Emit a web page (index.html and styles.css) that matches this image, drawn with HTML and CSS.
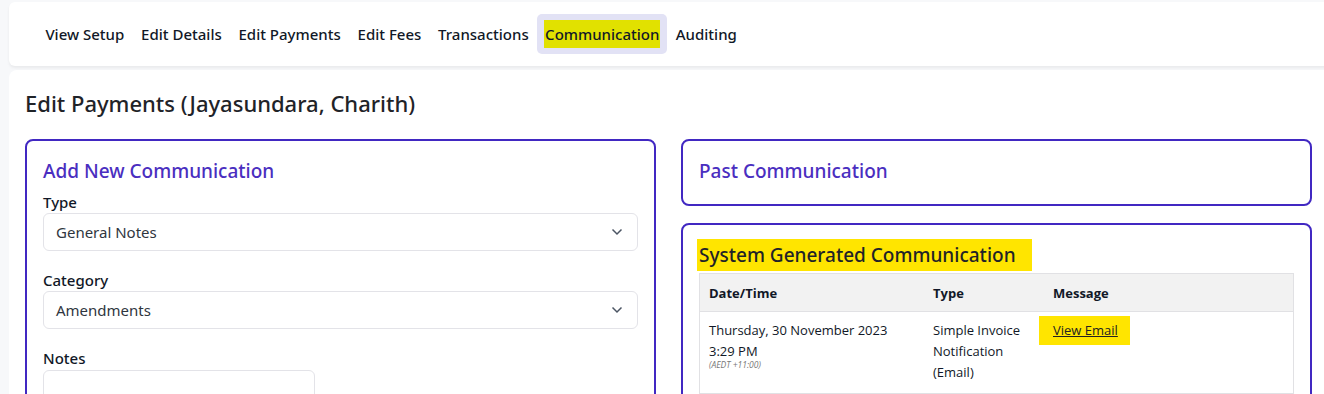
FILE: index.html
```html
<!DOCTYPE html>
<html>
<head>
  <link rel="stylesheet" href="styles.css">
</head>
<body>
  <div class="page">
    <div class="topbar">
      <nav class="tabs">
        <a class="tab">View Setup</a>
        <a class="tab">Edit Details</a>
        <a class="tab">Edit Payments</a>
        <a class="tab">Edit Fees</a>
        <a class="tab">Transactions</a>
        <a class="tab active"><span class="mark-nav">Communication</span></a>
        <a class="tab">Auditing</a>
      </nav>
    </div>

    <div class="content">
      <h1 class="page-title">Edit Payments (Jayasundara, Charith)</h1>

      <div class="columns">
        <div class="col">
          <div class="card">
            <h2 class="card-title">Add New Communication</h2>
            <label class="field-label">Type</label>
            <div class="select">
              <span>General Notes</span>
              <svg class="chevron" width="12" height="8" viewBox="0 0 12 8"><path d="M1.5 1.5 L6 6 L10.5 1.5" fill="none" stroke="#4b5563" stroke-width="1.5"/></svg>
            </div>
            <label class="field-label">Category</label>
            <div class="select">
              <span>Amendments</span>
              <svg class="chevron" width="12" height="8" viewBox="0 0 12 8"><path d="M1.5 1.5 L6 6 L10.5 1.5" fill="none" stroke="#4b5563" stroke-width="1.5"/></svg>
            </div>
            <label class="field-label">Notes</label>
            <div class="textarea"></div>
          </div>
        </div>

        <div class="col">
          <div class="card card-short">
            <h2 class="card-title">Past Communication</h2>
          </div>
          <div class="card">
            <h2 class="card-title dark"><span class="mark">System Generated Communication</span></h2>
            <table class="comms">
              <thead>
                <tr>
                  <th class="c-date">Date/Time</th>
                  <th class="c-type">Type</th>
                  <th>Message</th>
                </tr>
              </thead>
              <tbody>
                <tr>
                  <td>Thursday, 30 November 2023<br>3:29 PM<div class="tz">(AEDT +11:00)</div></td>
                  <td>Simple Invoice Notification (Email)</td>
                  <td><span class="mark-link"><a class="link">View Email</a></span></td>
                </tr>
              </tbody>
            </table>
          </div>
        </div>
      </div>
    </div>
  </div>
</body>
</html>
```

FILE: styles.css
```css
html, body {
  overflow: hidden;
}

body {
  margin: 0;
  background-color: #f7f8fa;
  font-family: "Noto Sans", "Open Sans", sans-serif;
  color: #111827;
}

.page {
  margin-left: 9px;
  padding-top: 2px;
  width: 1319px;
}

.topbar {
  background-color: white;
  height: 64px;
  border-radius: 6px 0 0 6px;
  box-shadow: 0 2px 3px rgba(0, 0, 0, 0.06);
  display: flex;
  align-items: center;
}

.tabs {
  display: flex;
  margin-left: 28px;
}

.tab {
  font-size: 15px;
  font-weight: 500;
  padding: 9px 8.4px;
  border-radius: 5px;
  line-height: 22px;
}

.tab.active {
  background-color: #e2e2f5;
  padding: 9px 7px 9px 7px;
}

.mark-nav {
  background-color: #e1e100;
  padding: 4px 1px;
}

.content {
  margin-top: 4px;
  background-color: white;
  border-radius: 8px 0 0 0;
  padding: 18px 16px 0 16px;
  height: 320px;
}

.page-title {
  margin: 0;
  font-size: 22px;
  font-weight: 500;
  line-height: 30px;
  color: #1f2328;
}

.columns {
  display: grid;
  grid-template-columns: 631px 631px;
  gap: 25px;
  margin-top: 21px;
}

.col {
  display: flex;
  flex-direction: column;
  gap: 17px;
}

.card {
  border: 2px solid #4128c2;
  border-radius: 8px;
  padding: 16px 16px 16px 16px;
}

.card-short {
  padding-bottom: 19px;
}

.card-title {
  margin: 0;
  font-size: 19px;
  font-weight: 500;
  line-height: 28px;
  color: #4a2ec0;
}

.card-title.dark {
  color: #1f2328;
}

.mark {
  background-color: #ffe500;
  padding: 3px 16px 3px 2px;
  margin-left: -2px;
}

.field-label {
  display: block;
  font-size: 15px;
  font-weight: 500;
  line-height: 22px;
  margin-top: 6px;
}

.select + .field-label {
  margin-top: 18px;
}

.select {
  height: 38px;
  box-sizing: border-box;
  border: 1px solid #e3e3e8;
  border-radius: 6px;
  display: flex;
  align-items: center;
  justify-content: space-between;
  padding: 0 14px 0 12px;
  font-size: 15px;
  color: #2f3640;
}

.textarea {
  width: 270px;
  height: 40px;
  border: 1px solid #e3e3e8;
  border-radius: 6px;
  margin-top: 1px;
}

.comms {
  width: 100%;
  margin-top: 4px;
  border-collapse: collapse;
  font-family: "Open Sans", "Noto Sans", sans-serif;
  font-size: 13px;
  border: 1px solid #e1e1e4;
}

.comms th {
  background-color: #f2f2f2;
  text-align: left;
  font-weight: 700;
  height: 37px;
  padding: 0 9px;
  border-bottom: 1px solid #e1e1e4;
}

.comms td {
  vertical-align: top;
  padding: 8px 9px 10px 9px;
  line-height: 21px;
  height: 61px;
}

.c-date {
  width: 206px;
}

.c-type {
  width: 102px;
}

.comms td:nth-child(2) {
  padding-right: 14px;
}

.tz {
  font-size: 8.5px;
  font-style: italic;
  color: #777;
  line-height: 10px;
  margin-top: -2px;
}

.mark-link {
  background-color: #ffe500;
  padding: 5px 12px 6px 14px;
  margin-left: -14px;
}

.link {
  text-decoration: underline;
  color: #222;
}
```
